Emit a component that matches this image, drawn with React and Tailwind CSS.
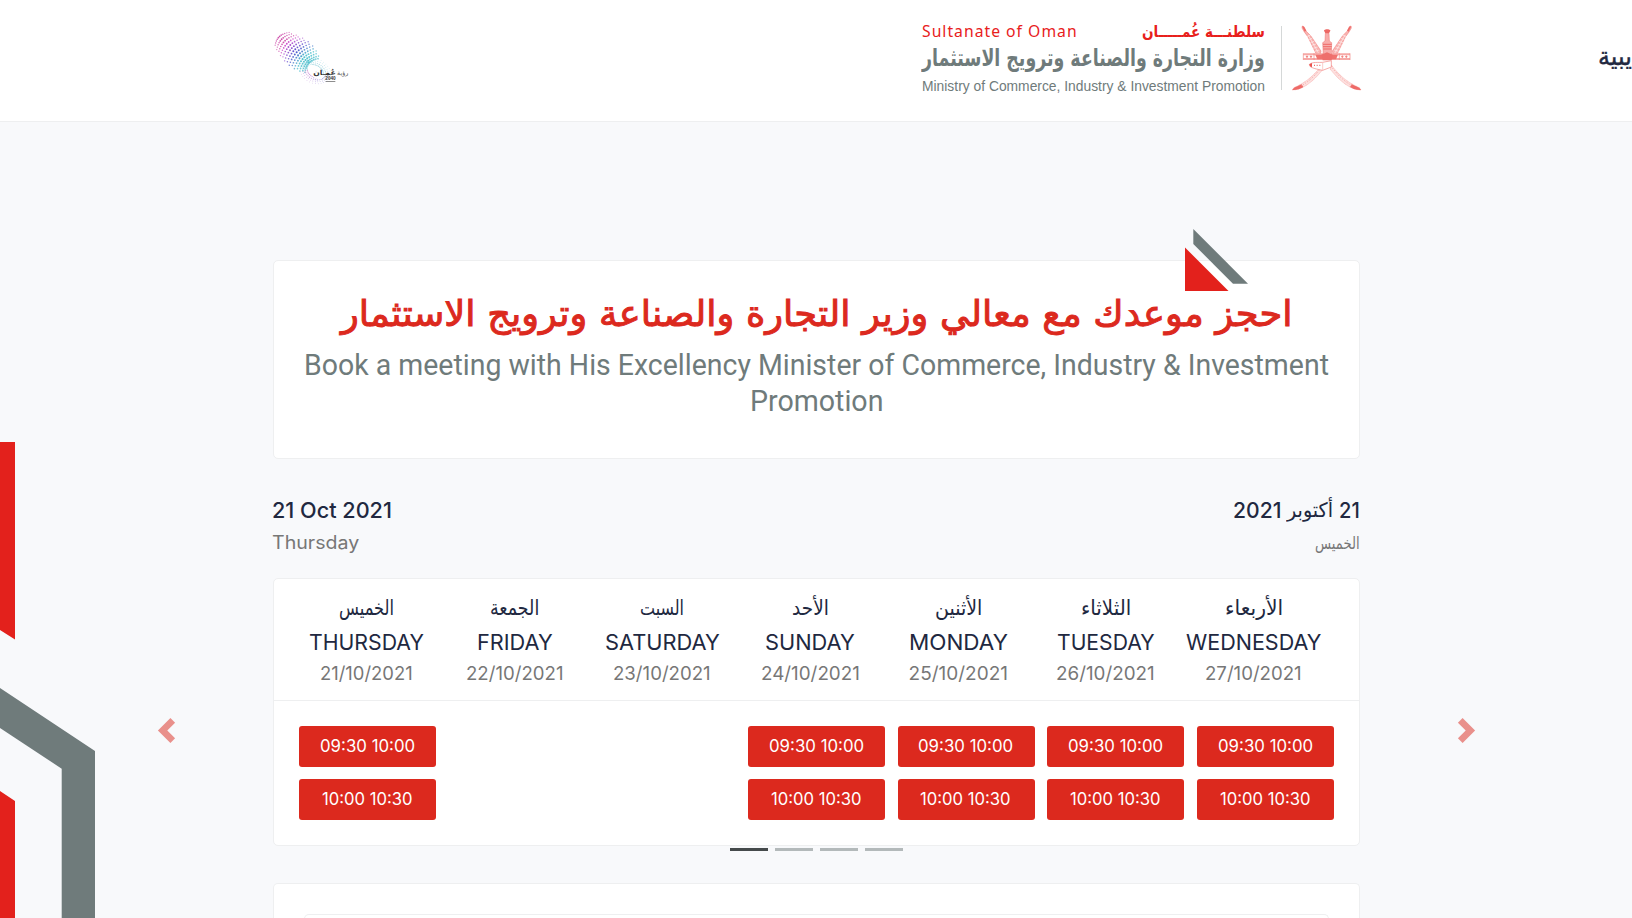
import React, { useLayoutEffect, useRef, useState } from "react";

// Single-line label stretched horizontally to a fixed width.
function Fit({ w, className = "", dir = "ltr", children }) {
  const ref = useRef(null);
  const [scale, setScale] = useState(1);
  useLayoutEffect(() => {
    setScale(w / ref.current.offsetWidth);
  }, [w]);
  return (
    <span className="flex justify-start shrink-0" dir="ltr" style={{ width: w }}>
      <span
        ref={ref}
        dir={dir}
        className={"inline-block shrink-0 whitespace-nowrap origin-left " + className}
        style={{ transform: `scaleX(${scale})` }}
      >
        {children}
      </span>
    </span>
  );
}

const AR = "font-['DejaVu_Sans',sans-serif]";
const LAT = "font-[Inter,sans-serif]";

const DAYS = [
  { ar: "الخميس", en: "THURSDAY", date: "21/10/2021", aw: 55, ew: 115, dw: 93, slots: true },
  { ar: "الجمعة", en: "FRIDAY", date: "22/10/2021", aw: 49, ew: 76, dw: 97, slots: false },
  { ar: "السبت", en: "SATURDAY", date: "23/10/2021", aw: 44, ew: 115, dw: 98, slots: false },
  { ar: "الأحد", en: "SUNDAY", date: "24/10/2021", aw: 37, ew: 90, dw: 99, slots: true },
  { ar: "الأثنين", en: "MONDAY", date: "25/10/2021", aw: 47, ew: 99, dw: 99, slots: true },
  { ar: "الثلاثاء", en: "TUESDAY", date: "26/10/2021", aw: 50, ew: 98, dw: 99, slots: true },
  { ar: "الأربعاء", en: "WEDNESDAY", date: "27/10/2021", aw: 58, ew: 135, dw: 97, slots: true },
];

function visionDots() {
  const dots = [];
  // plume rising to the upper left, sparse at the tip and dense near the opening
  const rings = 14;
  for (let i = 0; i < rings; i++) {
    const t = i / (rings - 1);
    const p = Math.pow(t, 1.15);
    const cx = 150 - 90 * p;
    const cy = 132 - 78 * p;
    const half = 24 + 24 * Math.sin(Math.PI * Math.min(1, 0.1 + t * 0.8));
    for (let j = -5; j <= 5; j++) {
      const s = (j + (i % 2) * 0.5) / 5.5;
      const bend = (1 - s * s) * -9 + 6;
      const x = cx + s * half * 0.68 + bend;
      const y = cy - s * half * 0.72 + bend;
      const hue = 186 + Math.max(0, Math.min(1, (t - 0.25) * 1.7)) * 130;
      const light = 56 + Math.abs(s) * 12;
      dots.push({ x, y, r: 3.4 - Math.abs(s) * 0.9 - t * 0.7, c: `hsl(${hue} 56% ${light}%)` });
    }
  }
  // rays fanning out around the opening
  for (let a = 0; a < 32; a++) {
    const ang = (a / 32) * Math.PI * 2;
    for (let k = 0; k < 4; k++) {
      const x = 166 + Math.cos(ang) * (24 + k * 7);
      const y = 154 + Math.sin(ang) * (19 + k * 6) + Math.cos(ang) * 6;
      const low = Math.sin(ang) > 0.1;
      dots.push({ x, y, r: 2 - k * 0.3, c: low ? `hsl(${215 + a * 6} 48% 74%)` : "hsl(190 50% 78%)" });
    }
  }
  return dots;
}

function VisionLogo() {
  return (
    <svg className="block" width="110" height="80" viewBox="0 0 330 240">
      {visionDots().map((d, i) => (
        <circle key={i} cx={d.x} cy={d.y} r={d.r} fill={d.c} />
      ))}
      <ellipse cx="167" cy="156" rx="28" ry="16" transform="rotate(38 167 156)" fill="#fff" />
      <text x="265" y="166" direction="rtl" textLength="34" lengthAdjust="spacingAndGlyphs" fontSize="19" fontFamily="DejaVu Sans" fill="#555">رؤية</text>
      <text x="227" y="166" direction="rtl" textLength="67" lengthAdjust="spacingAndGlyphs" fontSize="21" fontWeight="bold" fontFamily="DejaVu Sans" fill="#333">عُمـان</text>
      <text x="196" y="181" textLength="31" lengthAdjust="spacingAndGlyphs" fontSize="14" fontWeight="bold" fontFamily="Liberation Sans" fill="#333">2040</text>
      <rect x="197" y="184" width="29" height="2" fill="#555" />
    </svg>
  );
}

function Emblem() {
  const half = (
    <g>
      <path d="M67 33 L72 35 L78 48 L92 62 L123 108 L120 121 L109 118 L84 66 L73 51 L66 39 Z" fill="#f8b3b1" stroke="#f0716e" strokeWidth="1.5" />
      <path d="M66 34 L72 35 L79 47 L74 50 Z" fill="#ee6a67" />
      <path d="M85 61 L116 115 M92 60 L78 66 M97 70 L86 74 M103 79 L91 83 M108 87 L95 91 M113 96 L99 100 M118 105 L104 109" stroke="#fff" strokeWidth="1.5" />
      <path d="M70 115 H132 V121 H70 Z M70 129 H132 V135 H70 Z" fill="#f6a9a7" />
      <path d="M70 115 V135 M102 115 V135" stroke="#f28683" strokeWidth="2" />
      <path d="M77 125 L81 121 L85 125 L81 129 Z M89 125 L93 121 L97 125 L93 129 Z" fill="#f1817e" />
      <path d="M106 119 H134 V133 H112 Z" fill="#f0736f" />
      <path d="M154 150 C176 178 196 199 238 218 L243 225 C210 224 180 199 151 163 Z" fill="#fde0df" stroke="#f17e7b" strokeWidth="1.4" strokeDasharray="3 1.5" />
      <path d="M215 208 L238 218 L243 225 C230 226 220 222 210 216 Z" fill="#ee6a67" />
      <path d="M158 160 C180 188 200 204 218 213" fill="none" stroke="#f38f8c" strokeWidth="3" strokeDasharray="2 5" />
    </g>
  );
  return (
    <svg className="block" width="80" height="75" viewBox="30 15 240 225">
      {half}
      <g transform="matrix(-1 0 0 1 280 0)">{half}</g>
      <path d="M132 47 C132 41 151 41 151 47 L147 55 H136 Z" fill="#ed6865" />
      <path d="M136 55 H147 L148 78 L155 83 L154 120 H130 L128 83 L135 78 Z" fill="#f7adab" stroke="#ef706d" strokeWidth="1.5" />
      <path d="M129 88 H155 M129 95 H155 M130 102 H154" stroke="#ed615e" strokeWidth="2.6" />
      <path d="M124 119 L141 112 L158 119 L155 136 H128 Z" fill="#ee6f6c" />
      <path d="M88 148 C98 140 115 143 128 142 L154 137 V156 L128 166 C108 162 98 160 90 154 Z" fill="#fff" stroke="#f17e7b" strokeWidth="2" />
      <path d="M88 148 L96 144 V157 L90 154 Z" fill="#eb5450" />
      <path d="M102 151 H124" stroke="#ee6a67" strokeWidth="4" strokeDasharray="3 5" />
      <path d="M128 143 V165" stroke="#f7b3b1" strokeWidth="2" />
    </svg>
  );
}

function Slot({ children, w }) {
  return (
    <button className="flex h-[41px] w-[137px] items-center justify-center rounded-[3px] bg-[#dc291e] pb-[2px] pr-[1px] text-white">
      <Fit w={w} className={LAT + " text-[17px] leading-[24px]"}>{children}</Fit>
    </button>
  );
}

function Chevron({ flip }) {
  return (
    <svg className={flip ? "block -scale-x-100" : "block"} width="25" height="25" viewBox="0 0 8 8" fill="#dc291e" opacity="0.5">
      <path d="M5.25 0l-4 4 4 4 1.5-1.5L4.25 4l2.5-2.5L5.25 0z" />
    </svg>
  );
}

export default function App() {
  return (
    <div className="relative flex h-[918px] w-[1632px] flex-col overflow-hidden bg-[#f8f9fb]">
      <svg className="absolute left-0 top-[442px]" width="96" height="476" viewBox="0 442 96 476">
        <path d="M0 442H15V639.5L0 630Z M0 791L15 801V918H0Z" fill="#e3211c" />
        <path d="M0 688L95 751V918H61.7V768.7L0 728Z" fill="#6f7b7b" />
      </svg>

      <header className="flex h-[122px] shrink-0 items-start border-b border-[#eeeff0] bg-white">
        <div className="ml-[260px] mt-[20px] w-[110px] shrink-0">
          <VisionLogo />
        </div>
        <div className="ml-[552px] mt-[22px] flex w-[343px] shrink-0 flex-col text-[#6f7b7b]">
          <div className="flex h-[20px] justify-between text-[#e8201c]">
            <Fit w={156} className="font-['Noto_Sans',sans-serif] text-[15.5px] leading-[19px] tracking-[1px]">Sultanate of Oman</Fit>
            <Fit w={123} dir="rtl" className={AR + " text-[16px] font-bold leading-[20px]"}>سلطنـــة عُمـــــان</Fit>
          </div>
          <div className="flex h-[34px]">
            <Fit w={343} dir="rtl" className={AR + " text-[24px] font-bold leading-[32px]"}>وزارة التجارة والصناعة وترويج الاستثمار</Fit>
          </div>
          <Fit w={343} className="font-['Liberation_Sans',sans-serif] text-[14px] leading-[20px]">Ministry of Commerce, Industry &amp; Investment Promotion</Fit>
        </div>
        <div className="ml-[16px] mt-[26px] h-[64px] w-px shrink-0 bg-[#d5d8d8]" />
        <div className="ml-[8px] mt-[20px] shrink-0">
          <Emblem />
        </div>
        <div className="ml-auto mt-[38px] shrink-0 text-[#212840]">
          <Fit w={34} dir="rtl" className={AR + " text-[26px] leading-[36px] [-webkit-text-stroke:0.4px_#212840]"}>يبية</Fit>
        </div>
      </header>

      <main className="ml-[273px] flex w-[1087px] flex-col pt-[138px]">
        <section className="relative flex h-[199px] flex-col items-center rounded-[5px] border border-[#eeeff0] bg-white pt-[28px]">
          <svg className="absolute left-[911px] top-[-32px]" width="64" height="63" viewBox="1185 229 64 63">
            <path d="M1185 247.5L1228.5 291H1185Z" fill="#e3211c" />
            <path d="M1193.3 229L1248 283.7H1233L1193.3 244Z" fill="#6f7b7b" />
          </svg>
          <h1 className="flex h-[58px] text-[#dc291e]">
            <Fit w={952} dir="rtl" className={AR + " text-[36px] leading-[50px] [-webkit-text-stroke:1px_#dc291e]"}>احجز موعدك مع معالي وزير التجارة والصناعة وترويج الاستثمار</Fit>
          </h1>
          <h2 className="flex flex-col items-center text-[#6f7b7b]">
            <Fit w={1025} className="font-[Roboto,sans-serif] text-[29px] font-normal leading-[36px]">Book a meeting with His Excellency Minister of Commerce, Industry &amp; Investment</Fit>
            <Fit w={133} className="font-[Roboto,sans-serif] text-[29px] font-normal leading-[36px]">Promotion</Fit>
          </h2>
        </section>

        <section className="flex h-[119px] justify-between pt-[34px]">
          <div className="-ml-px flex flex-col">
            <Fit w={120} className={LAT + " text-[22px] font-medium leading-[34px] text-[#212840]"}>21 Oct 2021</Fit>
            <Fit w={87} className={LAT + " text-[18px] leading-[32px] text-[#777]"}>Thursday</Fit>
          </div>
          <div className="flex flex-col items-end">
            <div className="flex h-[34px] items-center gap-[6px] text-[#212840]">
              <Fit w={48} className={LAT + " text-[22px] font-medium leading-[34px]"}>2021</Fit>
              <Fit w={46} dir="rtl" className={AR + " text-[20px] leading-[34px]"}>أكتوبر</Fit>
              <Fit w={21} className={LAT + " text-[22px] font-medium leading-[34px]"}>21</Fit>
            </div>
            <Fit w={45} dir="rtl" className={AR + " text-[17px] leading-[32px] text-[#777]"}>الخميس</Fit>
          </div>
        </section>

        <section className="flex h-[268px] flex-col rounded-[5px] border border-[#eeeff0] bg-white">
          <div className="flex h-[122px] shrink-0 border-b border-[#eeeff0] pl-[19px] pt-[12px]">
            {DAYS.map((d) => (
              <div key={d.en} className="flex w-[147.8px] flex-col items-center">
                <Fit w={d.aw} dir="rtl" className={AR + " text-[21px] leading-[34px] text-[#212840]"}>{d.ar}</Fit>
                <Fit w={d.ew} className={LAT + " text-[22px] leading-[34px] text-[#212840]"}>{d.en}</Fit>
                <Fit w={d.dw} className={LAT + " text-[19px] leading-[30px] text-[#777]"}>{d.date}</Fit>
              </div>
            ))}
          </div>
          <div className="flex gap-[12.7px] pl-[25px] pt-[25px]">
            {DAYS.map((d) => (
              <div key={d.en} className="flex w-[137px] flex-col gap-[12px]">
                {d.slots && <Slot w={95}>09:30 10:00</Slot>}
                {d.slots && <Slot w={91}>10:00 10:30</Slot>}
              </div>
            ))}
          </div>
        </section>

        <div className="flex h-[37px] justify-center gap-[7px] pt-[2px]">
          <span className="h-[3px] w-[38px] bg-[#454a4b]" />
          <span className="h-[3px] w-[38px] bg-[#b3b9ba]" />
          <span className="h-[3px] w-[38px] bg-[#b3b9ba]" />
          <span className="h-[3px] w-[38px] bg-[#b3b9ba]" />
        </div>

        <section className="h-[60px] rounded-t-[5px] border border-b-0 border-[#eeeff0] bg-white px-[30px] pt-[30px]">
          <div className="h-[30px] rounded-t-[5px] border border-b-0 border-[#eeeff0]" />
        </section>
      </main>

      <button className="absolute left-[154px] top-[718px]"><Chevron /></button>
      <button className="absolute left-[1454px] top-[718px]"><Chevron flip /></button>
    </div>
  );
}
